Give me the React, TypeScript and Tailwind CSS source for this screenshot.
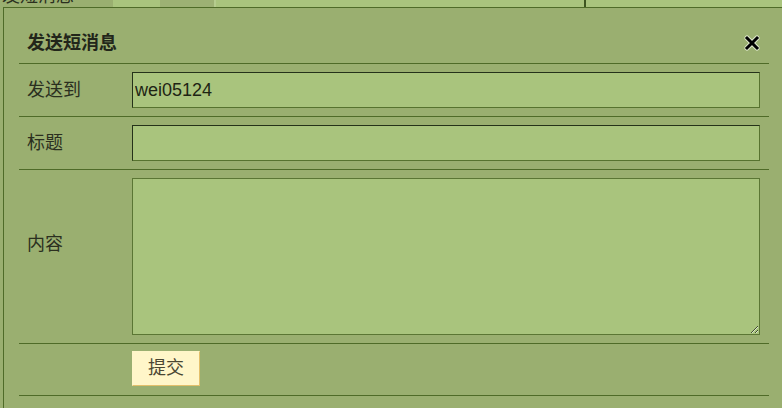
const FONT = "font-['Liberation_Sans','Noto_Sans_CJK_SC',sans-serif]";

function CloseIcon() {
  return (
    <svg width="16" height="16" viewBox="0 0 16 16" aria-hidden>
      <path d="M3 3 L13 13 M13 3 L3 13" stroke="#dfe8cc" strokeWidth="5" strokeLinecap="round" />
      <path d="M3 3 L13 13 M13 3 L3 13" stroke="#000" strokeWidth="3" strokeLinecap="square" />
    </svg>
  );
}

function FormRow({
  label,
  children,
  pad = "pt-[8px] pb-[8px]",
  labelPad = "",
}: {
  label: string;
  children: React.ReactNode;
  pad?: string;
  labelPad?: string;
}) {
  return (
    <div className={`flex items-center border-b border-[#4f6b28] ${pad}`}>
      <div className={`w-[113px] shrink-0 pl-[8px] text-[18px] leading-[22px] text-[#2b2f1f] ${labelPad}`}>{label}</div>
      <div className="flex-1 pr-[9px]">{children}</div>
    </div>
  );
}

export default function App() {
  const inputCls =
    "block h-[36px] w-full border border-t-[#25321a] border-l-[#25321a] border-r-[#57732f] border-b-[#57732f] bg-[#a9c47d] px-[2px] text-[18px] text-[#1e2414] outline-none";

  return (
    <div className={`h-[408px] w-[782px] overflow-hidden bg-[#9aaf70] ${FONT}`}>
      {/* strip of the page behind the dialog */}
      <div className="flex h-[7px] overflow-hidden">
        <div className="w-[113px] overflow-hidden">
          <div className="-mt-[15px] pl-[2px] text-[18px] leading-[22px] text-[#2b2f1f]">发短消息</div>
        </div>
        <div className="w-[47px] bg-[#a9c47d]" />
        <div className="w-[54px] bg-[#9db174]" />
        <div className="w-[2px] bg-[#b5cc8e]" />
        <div className="w-[368px] bg-[#a9c47d]" />
        <div className="w-[2px] bg-[#3d5520]" />
        <div className="flex-1 bg-[#a9c47d]" />
      </div>

      <div className="ml-[3px] h-[401px] border-l border-t border-[#4f6b28] pl-[15px] pr-[13px]">
        <div className="flex h-[56px] items-start justify-between border-b border-[#4f6b28] pl-[8px] pr-[9px] pt-[24px]">
          <span className="text-[18px] font-bold leading-[22px] text-[#22261a]">发送短消息</span>
          <span className="mt-[3px]">
            <CloseIcon />
          </span>
        </div>

        <FormRow label="发送到">
          <input className={inputCls} defaultValue="wei05124" />
        </FormRow>

        <FormRow label="标题">
          <input className={inputCls} defaultValue="" />
        </FormRow>

        <FormRow label="内容" labelPad="pb-[26px]">
          <textarea className="block h-[157px] w-full border border-[#5b7634] bg-[#a9c47d] text-[18px] outline-none" />
        </FormRow>

        <FormRow label="" pad="pt-[7px] pb-[9px]">
          <button className="h-[35px] w-[68px] border border-[#fff6c9] border-b-[#e3bf6a] border-r-[#e3bf6a] bg-[#fff6c9] text-[18px] text-[#4a4632]">
            提交
          </button>
        </FormRow>
      </div>
    </div>
  );
}
